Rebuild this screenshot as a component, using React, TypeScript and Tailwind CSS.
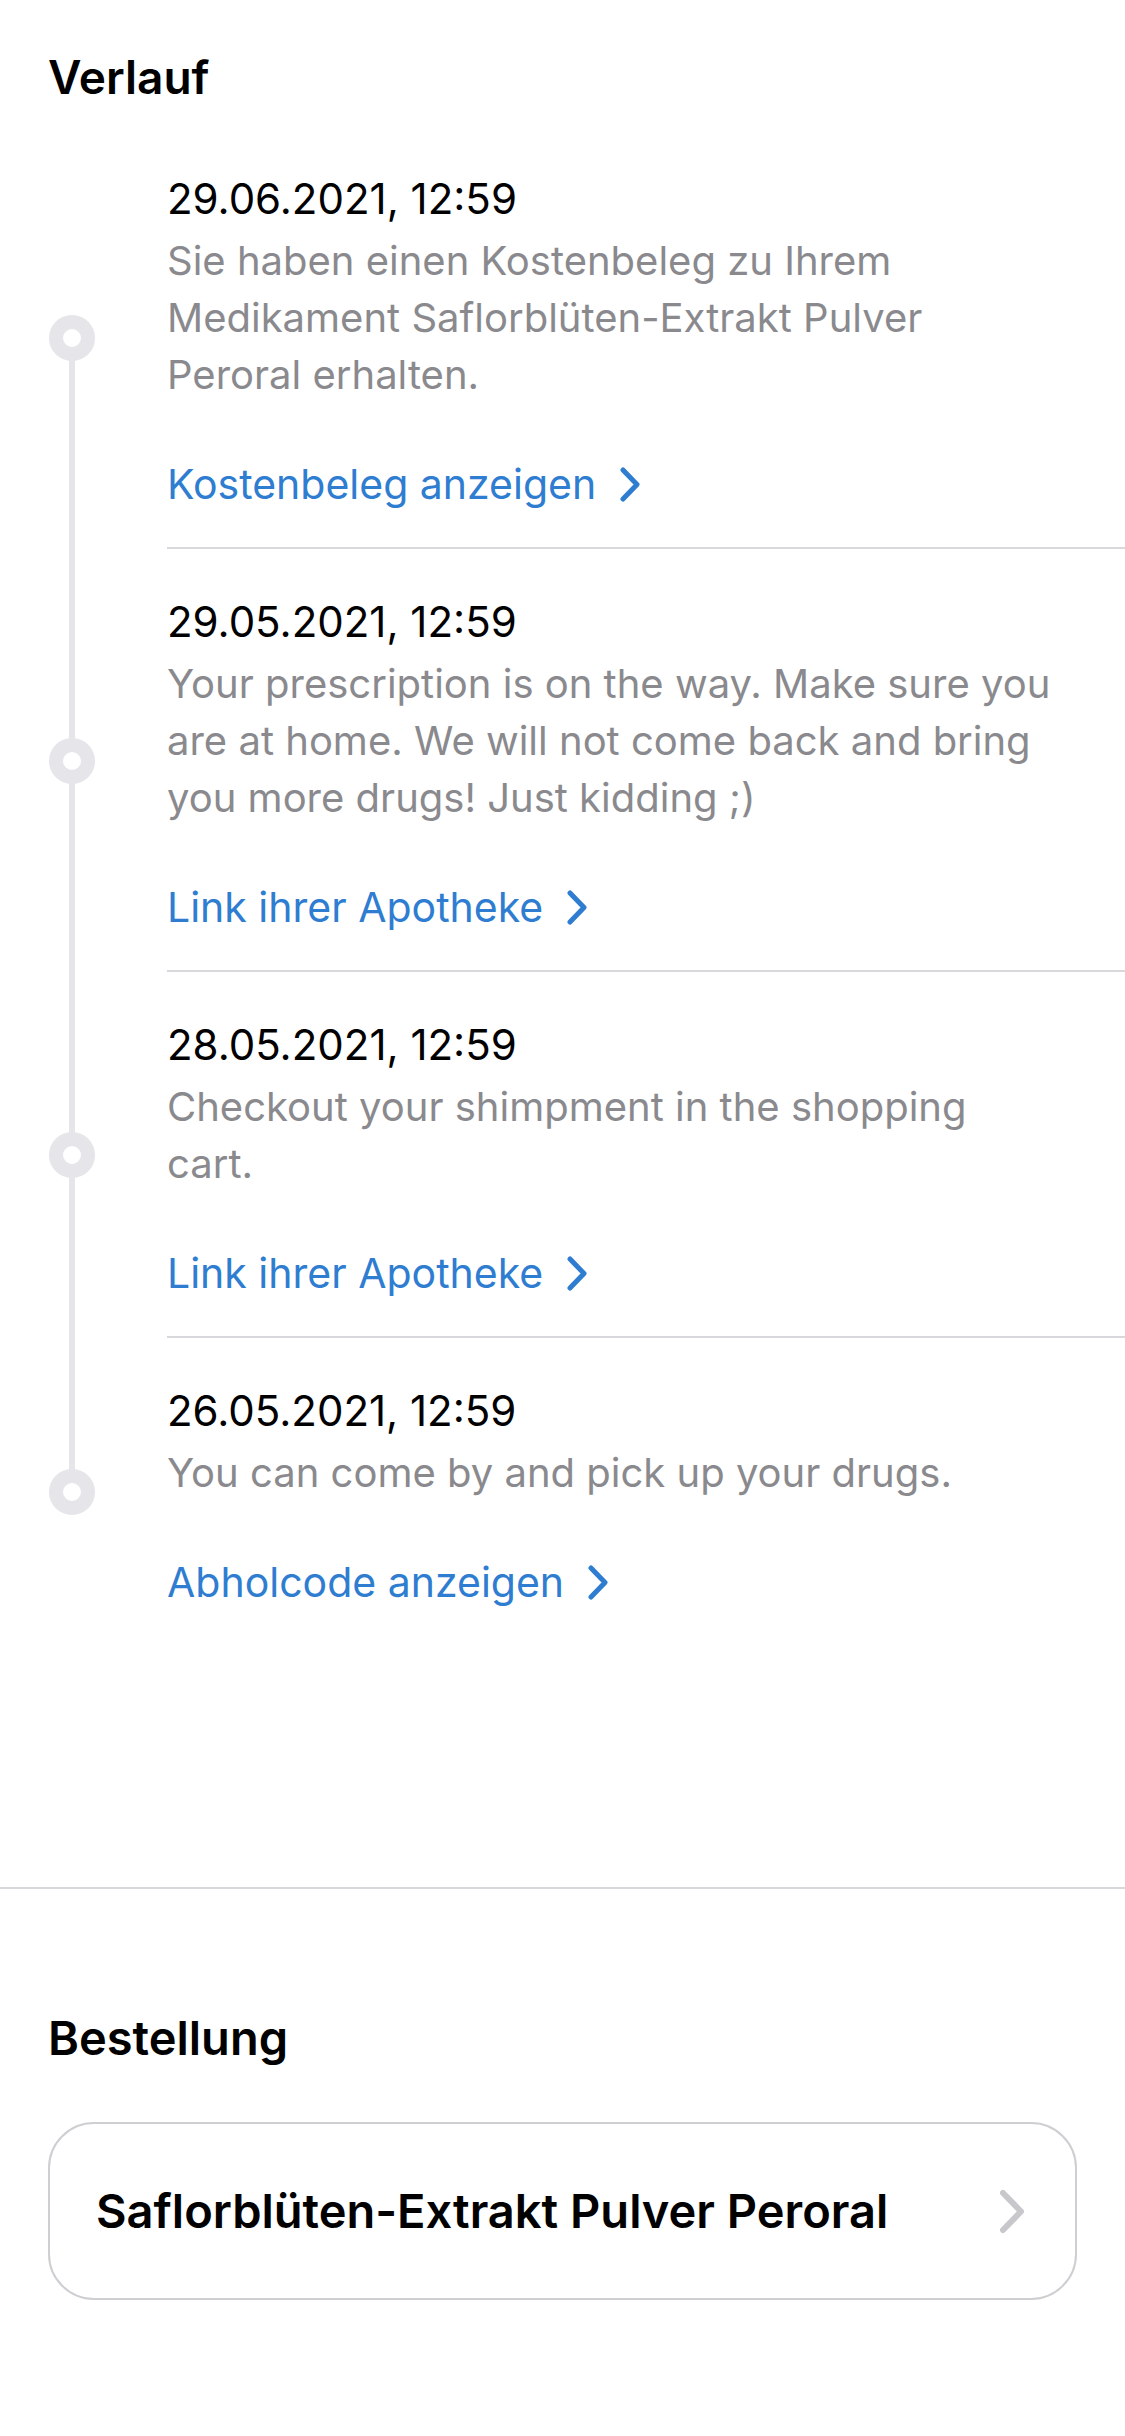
import React from 'react';

type Entry = {
  date: string;
  text: string;
  link: string;
};

const ENTRIES: Entry[] = [
  {
    date: '29.06.2021, 12:59',
    text: 'Sie haben einen Kostenbeleg zu Ihrem Medikament Saflorblüten-Extrakt Pulver Peroral erhalten.',
    link: 'Kostenbeleg anzeigen',
  },
  {
    date: '29.05.2021, 12:59',
    text: 'Your prescription is on the way. Make sure you are at home. We will not come back and bring you more drugs! Just kidding ;)',
    link: 'Link ihrer Apotheke',
  },
  {
    date: '28.05.2021, 12:59',
    text: 'Checkout your shimpment in the shopping cart.',
    link: 'Link ihrer Apotheke',
  },
  {
    date: '26.05.2021, 12:59',
    text: 'You can come by and pick up your drugs.',
    link: 'Abholcode anzeigen',
  },
];

const Chevron = ({ className, color }: { className: string; color: string }) => (
  <svg className={className} viewBox="0 0 20 35" fill="none">
    <polyline
      points="3,3 17,17.5 3,32"
      stroke={color}
      strokeWidth="5"
      strokeLinecap="round"
      strokeLinejoin="round"
    />
  </svg>
);

const TimelineItem = ({ entry, first, last }: { entry: Entry; first: boolean; last: boolean }) => (
  <div className="flex">
    {/* rail with dot */}
    <div className="relative flex w-[167px] shrink-0 items-center">
      {!first && <div className="absolute left-[69px] top-0 h-1/2 w-[6px] bg-[#e5e5ea]" />}
      {!last && <div className="absolute bottom-0 left-[69px] h-1/2 w-[6px] bg-[#e5e5ea]" />}
      <div className="relative ml-[49px] h-[46px] w-[46px] rounded-full border-[14px] border-[#e5e5ea] bg-white" />
    </div>

    <div className={`min-w-0 flex-1 pt-[48px] pb-[38px] ${last ? '' : 'border-b-2 border-[#d8d8dc]'}`}>
      <div className="pr-[66px]">
        <p className="text-[42px] leading-[50px] text-black">{entry.date}</p>
        <p className="mt-[8px] text-[40px] leading-[57px] text-[#8a8a8e]">{entry.text}</p>
        <a className="mt-[56px] flex items-center gap-[24px] text-[41px] leading-[50px] text-[#2e7dd1]">
          {entry.link}
          <Chevron className="h-[35px] w-[20px]" color="#2e7dd1" />
        </a>
      </div>
    </div>
  </div>
);

export default function App() {
  return (
    <div className="min-h-[2436px] w-[1125px] bg-white font-['Inter',sans-serif] antialiased">
      <section>
        <h2 className="px-[48px] pt-[49px] text-[46px] font-semibold leading-[56px] text-black">Verlauf</h2>
        <div className="mt-[21px]">
          {ENTRIES.map((entry, i) => (
            <TimelineItem key={i} entry={entry} first={i === 0} last={i === ENTRIES.length - 1} />
          ))}
        </div>
      </section>

      <div className="mt-[242px] h-[2px] bg-[#d8d8dc]" />

      <section className="px-[48px] pt-[121px]">
        <h2 className="text-[47px] font-semibold leading-[56px] text-black">Bestellung</h2>
        <button className="mt-[56px] flex h-[178px] w-full items-center justify-between rounded-[46px] border-2 border-[#cfcfd3] bg-white pl-[46px] pr-[50px] text-left">
          <span className="text-[47px] font-semibold leading-[56px] text-black">
            Saflorblüten-Extrakt Pulver Peroral
          </span>
          <svg className="h-[45px] w-[26px]" viewBox="0 0 26 45" fill="none">
            <polyline
              points="4,4 22,22.5 4,41"
              stroke="#c7c7cc"
              strokeWidth="6"
              strokeLinecap="round"
              strokeLinejoin="round"
            />
          </svg>
        </button>
      </section>
    </div>
  );
}
